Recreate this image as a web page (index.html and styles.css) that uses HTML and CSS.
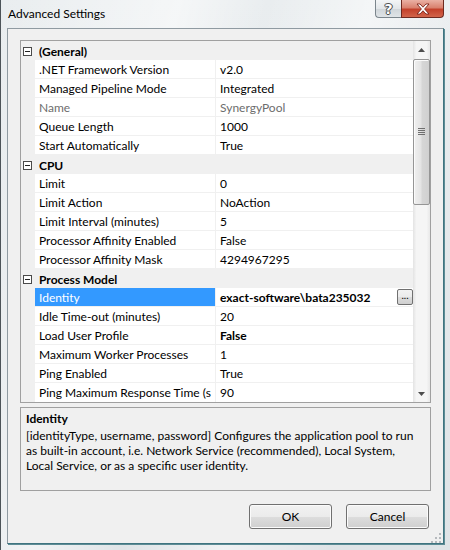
FILE: index.html
```html
<!DOCTYPE html>
<html>
<head>
<meta charset="utf-8">
<link rel="stylesheet" href="styles.css">
</head>
<body>
<div class="window">
  <div class="titlebar">
    <span class="title">Advanced Settings</span>
    <div class="caption-buttons">
      <div class="cap-help"><span class="help-glyph">?</span></div>
      <div class="cap-close">
        <svg width="16" height="12" viewBox="0 0 16 12">
          <path d="M2 1 L5 1 L8 4.2 L11 1 L14 1 L9.6 6 L14 11 L11 11 L8 7.8 L5 11 L2 11 L6.4 6 Z" fill="#fff" stroke="#7a2418" stroke-width="0.9" stroke-linejoin="round"/>
        </svg>
      </div>
    </div>
  </div>
  <div class="client">
    <div class="grid">
      <div class="rows">
        <div class="cat"><span class="margin"><span class="minus"></span></span><span class="cat-label">(General)</span></div>
        <div class="row"><span class="margin"></span><span class="name">.NET Framework Version</span><span class="value">v2.0</span></div>
        <div class="row"><span class="margin"></span><span class="name">Managed Pipeline Mode</span><span class="value">Integrated</span></div>
        <div class="row disabled"><span class="margin"></span><span class="name">Name</span><span class="value">SynergyPool</span></div>
        <div class="row"><span class="margin"></span><span class="name">Queue Length</span><span class="value">1000</span></div>
        <div class="row"><span class="margin"></span><span class="name">Start Automatically</span><span class="value">True</span></div>
        <div class="cat"><span class="margin"><span class="minus"></span></span><span class="cat-label">CPU</span></div>
        <div class="row"><span class="margin"></span><span class="name">Limit</span><span class="value">0</span></div>
        <div class="row"><span class="margin"></span><span class="name">Limit Action</span><span class="value">NoAction</span></div>
        <div class="row"><span class="margin"></span><span class="name">Limit Interval (minutes)</span><span class="value">5</span></div>
        <div class="row"><span class="margin"></span><span class="name">Processor Affinity Enabled</span><span class="value">False</span></div>
        <div class="row"><span class="margin"></span><span class="name">Processor Affinity Mask</span><span class="value">4294967295</span></div>
        <div class="cat"><span class="margin"><span class="minus"></span></span><span class="cat-label">Process Model</span></div>
        <div class="row selected"><span class="margin"></span><span class="name">Identity</span><span class="value"><span class="value-text bold">exact-software\bata235032</span><span class="ellipsis-btn">...</span></span></div>
        <div class="row"><span class="margin"></span><span class="name">Idle Time-out (minutes)</span><span class="value">20</span></div>
        <div class="row"><span class="margin"></span><span class="name">Load User Profile</span><span class="value bold">False</span></div>
        <div class="row"><span class="margin"></span><span class="name">Maximum Worker Processes</span><span class="value">1</span></div>
        <div class="row"><span class="margin"></span><span class="name">Ping Enabled</span><span class="value">True</span></div>
        <div class="row last"><span class="margin"></span><span class="name">Ping Maximum Response Time (s</span><span class="value">90</span></div>
      </div>
      <div class="scrollbar">
        <div class="sb-btn">
          <svg width="7" height="4" viewBox="0 0 7 4"><path d="M0 4 L3.5 0 L7 4 Z" fill="#4d4d4d"/></svg>
        </div>
        <div class="sb-track">
          <div class="sb-thumb">
            <svg width="7" height="8" viewBox="0 0 7 8">
              <rect x="0" y="0" width="7" height="1" fill="#6f6f6f"/>
              <rect x="0" y="2" width="7" height="1" fill="#6f6f6f"/>
              <rect x="0" y="4" width="7" height="1" fill="#6f6f6f"/>
              <rect x="0" y="6" width="7" height="1" fill="#6f6f6f"/>
            </svg>
          </div>
        </div>
        <div class="sb-btn">
          <svg width="7" height="4" viewBox="0 0 7 4"><path d="M0 0 L7 0 L3.5 4 Z" fill="#4d4d4d"/></svg>
        </div>
      </div>
    </div>
    <div class="desc">
      <div class="desc-title">Identity</div>
      <div class="desc-text">[identityType, username, password] Configures the application pool to run as built-in account, i.e. Network Service (recommended), Local System, Local Service, or as a specific user identity.</div>
    </div>
    <div class="buttons">
      <div class="btn">OK</div>
      <div class="btn">Cancel</div>
    </div>
    <div class="grip">
      <svg width="10" height="10" viewBox="0 0 10 10">
        <rect x="8" y="0" width="2" height="2" fill="#b5b9bd"/>
        <rect x="4" y="4" width="2" height="2" fill="#b5b9bd"/>
        <rect x="8" y="4" width="2" height="2" fill="#b5b9bd"/>
        <rect x="0" y="8" width="2" height="2" fill="#b5b9bd"/>
        <rect x="4" y="8" width="2" height="2" fill="#b5b9bd"/>
        <rect x="8" y="8" width="2" height="2" fill="#b5b9bd"/>
      </svg>
    </div>
  </div>
</div>
</body>
</html>
```

FILE: styles.css
```css
* { box-sizing: border-box; }

html, body {
  margin: 0;
  padding: 0;
}

body {
  width: 450px;
  height: 550px;
  overflow: hidden;
  font-family: "Segoe UI", Lato, "Open Sans", sans-serif;
  font-size: 12px;
  color: #000;
  background: #e2e6e8;
}

.window {
  width: 450px;
  height: 550px;
  display: flex;
  flex-direction: column;
  padding: 0 6px 0 6px;
  border-left: 1px solid #4c5358;
  background:
    linear-gradient(105deg, rgba(255,255,255,0) 0%, rgba(255,255,255,0.55) 30%, rgba(255,255,255,0) 45%, rgba(255,255,255,0.5) 62%, rgba(255,255,255,0) 80%),
    linear-gradient(180deg, #e9edef 0%, #dfe4e7 100%);
}

.titlebar {
  height: 28px;
  display: flex;
  align-items: flex-start;
  justify-content: space-between;
  flex-shrink: 0;
}

.title {
  padding-top: 6px;
  padding-left: 1px;
  font-size: 12px;
  line-height: 16px;
  color: #000;
}

.caption-buttons {
  display: flex;
  margin-right: 0;
}

.cap-help {
  width: 26px;
  height: 18px;
  border: 1px solid #7b858c;
  border-top: none;
  border-right: none;
  border-radius: 0 0 0 4px;
  background: linear-gradient(180deg, #f3f5f6 0%, #e2e6e9 50%, #cfd5d9 51%, #dfe4e7 100%);
  display: flex;
  align-items: center;
  justify-content: center;
}

.help-glyph {
  font-family: "DejaVu Sans", sans-serif;
  font-size: 14px;
  font-weight: bold;
  line-height: 14px;
  color: #fff;
  text-shadow: 0 0 1px #444, 0 0 1px #444, 1px 0 0 #555, -1px 0 0 #555, 0 1px 0 #555, 0 -1px 0 #555;
}

.cap-close {
  width: 43px;
  height: 18px;
  border: 1px solid #6e2a20;
  border-top: none;
  border-radius: 0 0 4px 0;
  background: linear-gradient(180deg, #eab1a4 0%, #d9826f 45%, #c3412b 55%, #d2654b 100%);
  display: flex;
  align-items: center;
  justify-content: center;
}

.client {
  position: relative;
  width: 437px;
  height: 516px;
  background: #f0f0f0;
  border: 1px solid #8f9aa1;
  border-right-color: #3f7480;
  border-bottom-color: #3f7480;
  box-shadow: 1px 1px 0 #5d8c95;
  padding: 11px 12px 0 12px;
  display: flex;
  flex-direction: column;
}

.grid {
  height: 363px;
  border: 1px solid #a0a0a0;
  display: flex;
  background: #fff;
  flex-shrink: 0;
}

.rows {
  flex: 1;
  display: flex;
  flex-direction: column;
  overflow: hidden;
}

.row, .cat {
  height: 19px;
  display: flex;
  flex-shrink: 0;
}

.row {
  border-bottom: 1px solid #f0f0f0;
}

.row.last {
  border-bottom: none;
}

.cat {
  background: #f0f0f0;
  align-items: center;
}

.margin {
  width: 14px;
  flex-shrink: 0;
  background: #f0f0f0;
  display: flex;
  align-items: center;
}

.cat .margin {
  height: 19px;
  padding-top: 1px;
}

.minus {
  position: relative;
  margin-left: 2px;
  width: 9px;
  height: 9px;
  border: 1px solid #4a4a4a;
  background: #fff;
}

.minus::after {
  content: "";
  position: absolute;
  left: 1px;
  top: 3px;
  width: 5px;
  height: 1px;
  background: #222;
}

.cat-label {
  padding-left: 4px;
  padding-top: 2px;
  font-weight: bold;
  line-height: 17px;
}

.name {
  width: 181px;
  flex-shrink: 0;
  padding-left: 4px;
  padding-top: 1px;
  line-height: 17px;
  white-space: nowrap;
  overflow: hidden;
  border-right: 1px solid #f0f0f0;
}

.value {
  flex: 1;
  padding-left: 4px;
  line-height: 18px;
  white-space: nowrap;
  display: flex;
  align-items: center;
}

.value-text {
  flex: 1;
  padding-top: 2px;
  line-height: 16px;
}

.row > .value {
  padding-top: 1px;
}

.selected > .value {
  padding-top: 0;
}

.bold {
  font-weight: bold;
}

.disabled .name, .disabled .value {
  color: #6d6d6d;
}

.selected .name {
  background: #3399ff;
  color: #fff;
}

.ellipsis-btn {
  width: 16px;
  height: 16px;
  margin-right: 0;
  border: 1px solid #707070;
  border-radius: 2px;
  background: linear-gradient(180deg, #f2f2f2 0%, #ebebeb 50%, #dddddd 51%, #cfcfcf 100%);
  font-size: 10px;
  line-height: 11px;
  text-align: center;
  color: #000;
}

.scrollbar {
  width: 17px;
  flex-shrink: 0;
  display: flex;
  flex-direction: column;
  background: linear-gradient(90deg, #e3e3e3 0%, #f5f5f5 20%, #f5f5f5 80%, #e8e8e8 100%);
}

.sb-btn {
  height: 17px;
  display: flex;
  align-items: center;
  justify-content: center;
  flex-shrink: 0;
}

.sb-track {
  flex: 1;
  padding-top: 1px;
}

.sb-thumb {
  height: 146px;
  border: 1px solid #959595;
  border-radius: 2px;
  background: linear-gradient(90deg, #f0f0f0 0%, #e4e4e4 45%, #d6d6d6 55%, #d0d0d0 100%);
  box-shadow: inset 1px 1px 0 #fbfbfb;
  display: flex;
  align-items: center;
  justify-content: center;
}

.desc {
  margin-top: 4px;
  height: 84px;
  border: 1px solid #a0a0a0;
  background: #f0f0f0;
  padding: 3px 5px 0 5px;
  flex-shrink: 0;
}

.desc-title {
  font-weight: bold;
  line-height: 15px;
  margin-bottom: 2px;
}

.desc-text {
  line-height: 15px;
}

.buttons {
  margin-top: 13px;
  display: flex;
  justify-content: flex-end;
  gap: 14px;
  padding-right: 2px;
}

.btn {
  width: 83px;
  height: 25px;
  border: 1px solid #707070;
  border-radius: 3px;
  background: linear-gradient(180deg, #f2f2f2 0%, #ebebeb 50%, #dddddd 51%, #cfcfcf 100%);
  box-shadow: inset 0 0 0 1px #fbfbfb;
  text-align: center;
  line-height: 23px;
}

.grip {
  position: absolute;
  right: 2px;
  bottom: 2px;
  width: 10px;
  height: 10px;
}
```
